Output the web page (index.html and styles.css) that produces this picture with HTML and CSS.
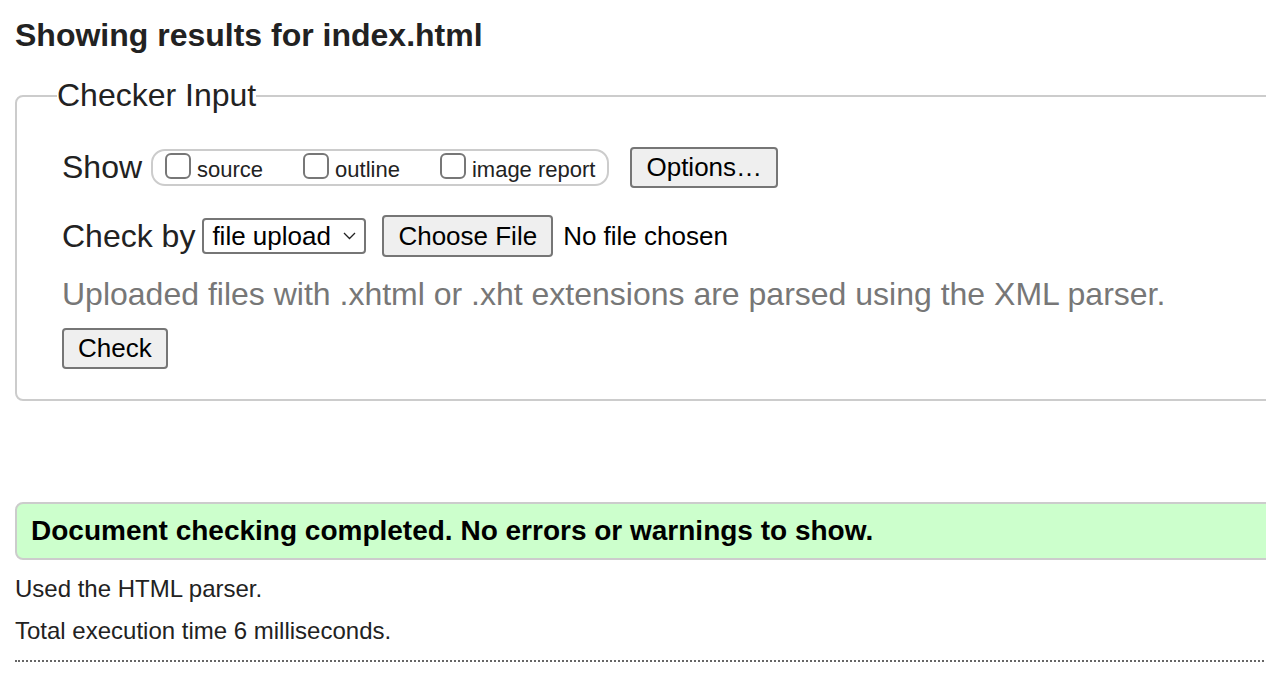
FILE: index.html
```html
<!DOCTYPE html>
<html lang="en">
<head>
<meta charset="utf-8">
<title>Showing results for index.html</title>
<link rel="stylesheet" href="styles.css">
</head>
<body>
<div class="page">
  <h2 class="title">Showing results for index.html</h2>
  <form class="checker">
    <fieldset class="input-box">
      <legend class="legend">Checker Input</legend>
      <div class="row row-show">
        <span class="row-label">Show</span>
        <div class="show-group">
          <label class="opt"><input type="checkbox" class="cb"><span>source</span></label>
          <label class="opt"><input type="checkbox" class="cb"><span>outline</span></label>
          <label class="opt"><input type="checkbox" class="cb"><span>image report</span></label>
        </div>
        <button type="button" class="btn btn-options">Options…</button>
      </div>
      <div class="row row-by">
        <span class="row-label">Check by</span>
        <div class="select-wrap">
          <select class="select"><option>file upload</option></select>
          <svg class="chev" width="13" height="8" viewBox="0 0 13 8"><path d="M1 1 L6.5 6.5 L12 1" fill="none" stroke="#222" stroke-width="1.3"/></svg>
        </div>
        <button type="button" class="btn btn-file">Choose File</button>
        <span class="nofile">No file chosen</span>
      </div>
      <p class="hint">Uploaded files with .xhtml or .xht extensions are parsed using the XML parser.</p>
      <div class="row row-submit">
        <button type="button" class="btn btn-check">Check</button>
      </div>
    </fieldset>
  </form>
  <div class="success">Document checking completed. No errors or warnings to show.</div>
  <p class="note">Used the HTML parser.</p>
  <p class="note">Total execution time 6 milliseconds.</p>
  <hr class="sep">
</div>
</body>
</html>
```
FILE: styles.css
```css
html, body {
  margin: 0;
  padding: 0;
  background: #fff;
  overflow: hidden;
}
body {
  font-family: "Liberation Sans", Arial, sans-serif;
  color: #222;
}
.page {
  width: 1300px;
  padding: 0 0 0 15px;
}
.title {
  margin: 15px 0 0 0;
  font-size: 32px;
  font-weight: bold;
  line-height: 40px;
  color: #222;
}
.checker {
  margin: 22px 0 0 0;
}
.input-box {
  margin: 0;
  border: 2px solid #ccc;
  border-radius: 8px;
  padding: 0 0 30px 40px;
}
.legend {
  padding: 0;
  font-size: 32px;
  line-height: 37px;
  color: #222;
}
.row {
  display: flex;
  align-items: center;
  padding-left: 5px;
}
.row-label {
  font-size: 32px;
  line-height: 37px;
}
.row-show {
  margin-top: 33px;
  height: 41px;
}
.show-group {
  display: flex;
  align-items: flex-end;
  margin-left: 9px;
  height: 33px;
  padding: 0 12px 0 12px;
  border: 2px solid #ccc;
  border-radius: 14px;
}
.opt {
  display: flex;
  align-items: flex-end;
  font-size: 22px;
  line-height: 26px;
  margin-right: 40px;
  height: 31px;
  padding-bottom: 1px;
  box-sizing: border-box;
}
.opt:last-child {
  margin-right: 0;
}
.opt span {
  margin-left: 6px;
}
.cb {
  appearance: none;
  -webkit-appearance: none;
  margin: 0;
  width: 26px;
  height: 26px;
  border: 2px solid #777;
  border-radius: 6px;
  background: #fff;
  align-self: flex-start;
}
.btn {
  font-family: "Liberation Sans", Arial, sans-serif;
  font-size: 26px;
  color: #000;
  background: #efefef;
  border: 2px solid #767676;
  border-radius: 4px;
  padding: 0 14px;
  height: 41px;
  line-height: 37px;
}
.btn-options {
  margin-left: 21px;
}
.row-by {
  margin-top: 27px;
  height: 42px;
}
.select-wrap {
  position: relative;
  margin-left: 7px;
  height: 36px;
}
.select {
  appearance: none;
  -webkit-appearance: none;
  font-family: "Liberation Sans", Arial, sans-serif;
  font-size: 26px;
  color: #000;
  background: #fff;
  border: 2px solid #767676;
  border-radius: 4px;
  width: 164px;
  height: 36px;
  padding: 0 0 0 8px;
  margin: 0;
}
.chev {
  position: absolute;
  right: 10px;
  top: 14px;
  pointer-events: none;
}
.btn-file {
  margin-left: 16px;
  height: 42px;
}
.nofile {
  margin-left: 10px;
  font-size: 26px;
  color: #000;
}
.hint {
  margin: 19px 0 0 5px;
  font-size: 32px;
  line-height: 37px;
  color: #777;
}
.row-submit {
  margin-top: 15px;
}
.success {
  margin: 101px 0 0 0;
  border: 2px solid #ccc;
  border-radius: 8px;
  background: #ccffcc;
  padding: 0 14px;
  height: 54px;
  line-height: 54px;
  font-size: 28px;
  font-weight: bold;
  color: #000;
}
.note {
  margin: 16px 0 0 0;
  font-size: 24px;
  line-height: 26px;
  color: #222;
}
.sep {
  margin: 16px 0 0 0;
  border: 0;
  border-top: 2px dotted #666;
  height: 0;
}
```
